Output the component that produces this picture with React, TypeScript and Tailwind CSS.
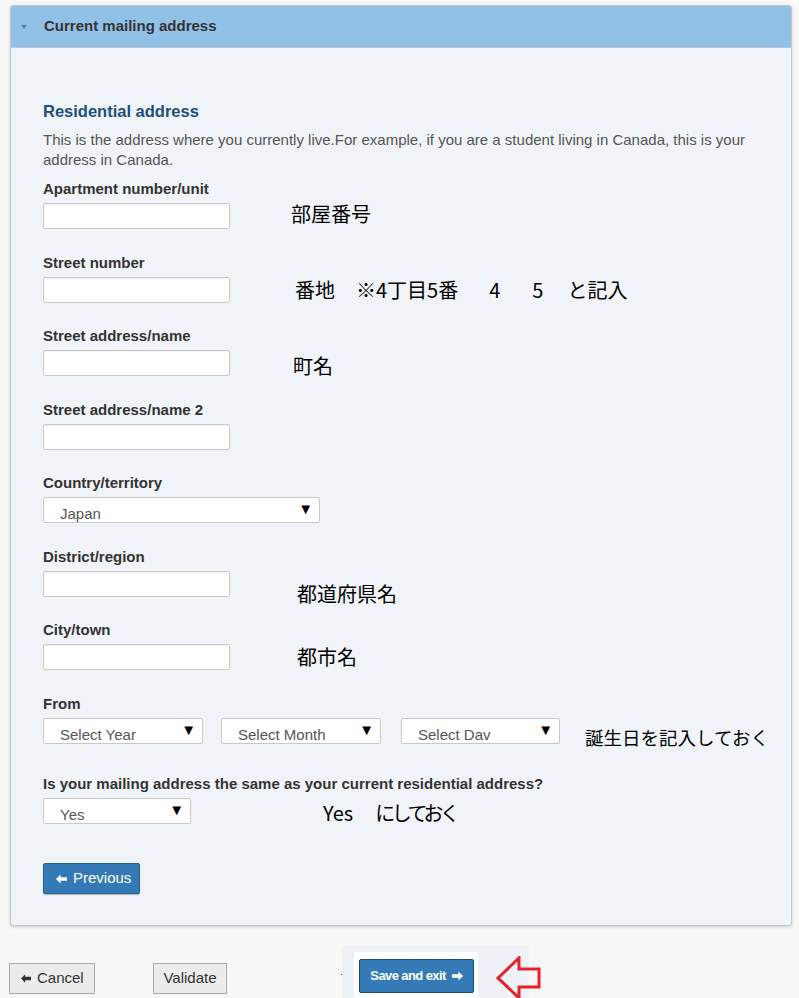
import type { ReactNode } from 'react';

const SANS = { fontFamily: '"Liberation Sans", Arial, sans-serif' };
const JP = { fontFamily: '"Noto Sans CJK JP", "Noto Sans", sans-serif' };

function ArrowIcon({ dir, className }: { dir: 'left' | 'right'; className?: string }) {
  return (
    <svg aria-hidden="true" viewBox="0 0 12 10" className={className} fill="currentColor">
      {dir === 'left' ? (
        <path d="M0 5 5 0v3h7v4H5v3Z" />
      ) : (
        <path d="M12 5 7 0v3H0v4h7v3Z" />
      )}
    </svg>
  );
}

function TextBox() {
  return <div className="h-[26px] w-[187px] shrink-0 rounded-[2px] border border-[#c8c8c8] bg-white shadow-[inset_0_1px_1px_rgba(0,0,0,0.06)]" />;
}

function Select({ width, text }: { width: string; text: string }) {
  return (
    <div className={`relative h-[26px] ${width} shrink-0 overflow-hidden rounded-[2px] border border-[#c8c8c8] bg-white`}>
      <div className="pl-[16px] pt-[7px] text-[15px] leading-[17px] text-[#555]">{text}</div>
      <span className="absolute right-[6px] top-[3px] text-[15px] leading-[15px] text-black">▼</span>
    </div>
  );
}

function Field({ label, children, className = 'mb-[24.5px]' }: { label: string; children: ReactNode; className?: string }) {
  return (
    <div className={className}>
      <div className="mb-[5px] text-[15px] font-bold leading-[18px] text-[#333]">{label}</div>
      <div className="flex h-[26px] items-start">{children}</div>
    </div>
  );
}

function Note({ children, className = '' }: { children: ReactNode; className?: string }) {
  return (
    <span className={`shrink-0 whitespace-nowrap text-[20px] leading-[28px] text-black ${className}`} style={JP}>
      {children}
    </span>
  );
}

export default function App() {
  return (
    <div className="relative h-[998px] w-[799px] overflow-hidden bg-[#f8f8f8]" style={SANS}>
      <section className="ml-[10px] mt-[5px] w-[782px] overflow-hidden rounded-[3px] border border-[#c4c8cc] bg-[#f0f4f8] shadow-[0_1px_3px_rgba(0,0,0,0.18)]">
        <header className="flex h-[42px] items-center border-b border-[#b9c8d6] bg-[#92c1e8]">
          <svg aria-hidden="true" viewBox="0 0 6 4" className="ml-[10px] h-[4px] w-[6px] text-[#4d7fae]" fill="currentColor">
            <path d="M0 0h6L3 4Z" />
          </svg>
          <h2 className="ml-[17px] text-[15px] font-bold text-[#333]">Current mailing address</h2>
        </header>

        <div className="pb-[31px] pl-[32px] pr-[24px] pt-[53px]">
          <h3 className="text-[16.5px] font-bold leading-[20px] text-[#1d4f7e]">Residential address</h3>
          <p className="mt-[9px] text-[15px] leading-[19.5px] text-[#555]">
            This is the address where you currently live.For example, if you are a student living in Canada, this is your address in Canada.
          </p>

          <div className="mt-[11px]">
            <Field label="Apartment number/unit">
              <TextBox />
              <Note className="-mt-[3px] ml-[61px]">部屋番号</Note>
            </Field>

            <Field label="Street number">
              <TextBox />
              <div className="-mt-[1px] ml-[65px] flex">
                <Note>番地</Note>
                <Note className="ml-[21px]">※4丁目5番</Note>
                <Note className="ml-[31px]">4</Note>
                <Note className="ml-[32px]">5</Note>
                <Note className="ml-[24px]">と記入</Note>
              </div>
            </Field>

            <Field label="Street address/name">
              <TextBox />
              <Note className="ml-[63px] mt-[2px]">町名</Note>
            </Field>

            <Field label="Street address/name 2">
              <TextBox />
            </Field>

            <Field label="Country/territory">
              <Select width="w-[277px]" text="Japan" />
            </Field>

            <Field label="District/region">
              <TextBox />
              <Note className="ml-[67px] mt-[9px]">都道府県名</Note>
            </Field>

            <Field label="City/town">
              <TextBox />
              <Note className="-mt-[1px] ml-[67px]">都市名</Note>
            </Field>

            <Field label="From" className="mb-[31.5px]">
              <Select width="w-[160px]" text="Select Year" />
              <div className="ml-[18px] shrink-0">
                <Select width="w-[160px]" text="Select Month" />
              </div>
              <div className="ml-[20px] shrink-0">
                <Select width="w-[159px]" text="Select Dav" />
              </div>
              <Note className="ml-[25px] mt-[5px] !text-[18.5px]">誕生日を記入しておく</Note>
            </Field>

            <Field label="Is your mailing address the same as your current residential address?" className="mb-[39px]">
              <Select width="w-[148px]" text="Yes" />
              <Note className="ml-[132px] mt-[1px]">Yes</Note>
              <Note className="ml-[22px] mt-[1px] tracking-[-3.5px]">にしておく</Note>
            </Field>
          </div>

          <button
            type="button"
            className="flex h-[31px] w-[97px] items-center gap-[6px] rounded-[2px] border border-[#2a5f8f] bg-[#337ab7] pl-[12px] text-[15px] text-white shadow-[0_1px_1px_rgba(0,0,0,0.25)]"
          >
            <ArrowIcon dir="left" className="h-[10px] w-[11px]" />
            Previous
          </button>
        </div>
      </section>

      <div className="mt-[20px] flex items-start">
        <button
          type="button"
          className="ml-[9px] mt-[17px] flex h-[31px] w-[86px] items-center gap-[6px] border border-[#a8a8a8] bg-[#ececec] pl-[11px] text-[15px] text-[#333]"
        >
          <ArrowIcon dir="left" className="h-[9px] w-[10px]" />
          Cancel
        </button>
        <button
          type="button"
          className="ml-[58px] mt-[17px] h-[31px] w-[74px] border border-[#a8a8a8] bg-[#ececec] text-[15px] text-[#333]"
        >
          Validate
        </button>

        <div className="relative ml-[115px] h-[60px] w-[187px] bg-[#eef2f6] pl-[12px] pt-[6px]">
          <span className="absolute -left-[1px] top-[28px] h-[1px] w-[1px] bg-[#c00]" />
          <div className="h-[60px] w-[124px] bg-white pl-[5px] pt-[7px]">
            <button
              type="button"
              className="flex h-[34px] w-[115px] items-center justify-center gap-[6px] rounded-[2px] border border-[#1f4b72] bg-[#337ab7] text-[13px] font-bold tracking-[-0.6px] text-white"
            >
              Save and exit
              <ArrowIcon dir="right" className="h-[10px] w-[11px]" />
            </button>
          </div>
        </div>

        <svg aria-hidden="true" viewBox="0 0 46 44" className="relative ml-[-33px] mt-[10px] h-[44px] w-[46px]">
          <path d="M2 22 23 2v11h20v18H23v11Z" fill="none" stroke="#e8202a" strokeWidth="3" strokeLinejoin="miter" />
        </svg>
      </div>
    </div>
  );
}
